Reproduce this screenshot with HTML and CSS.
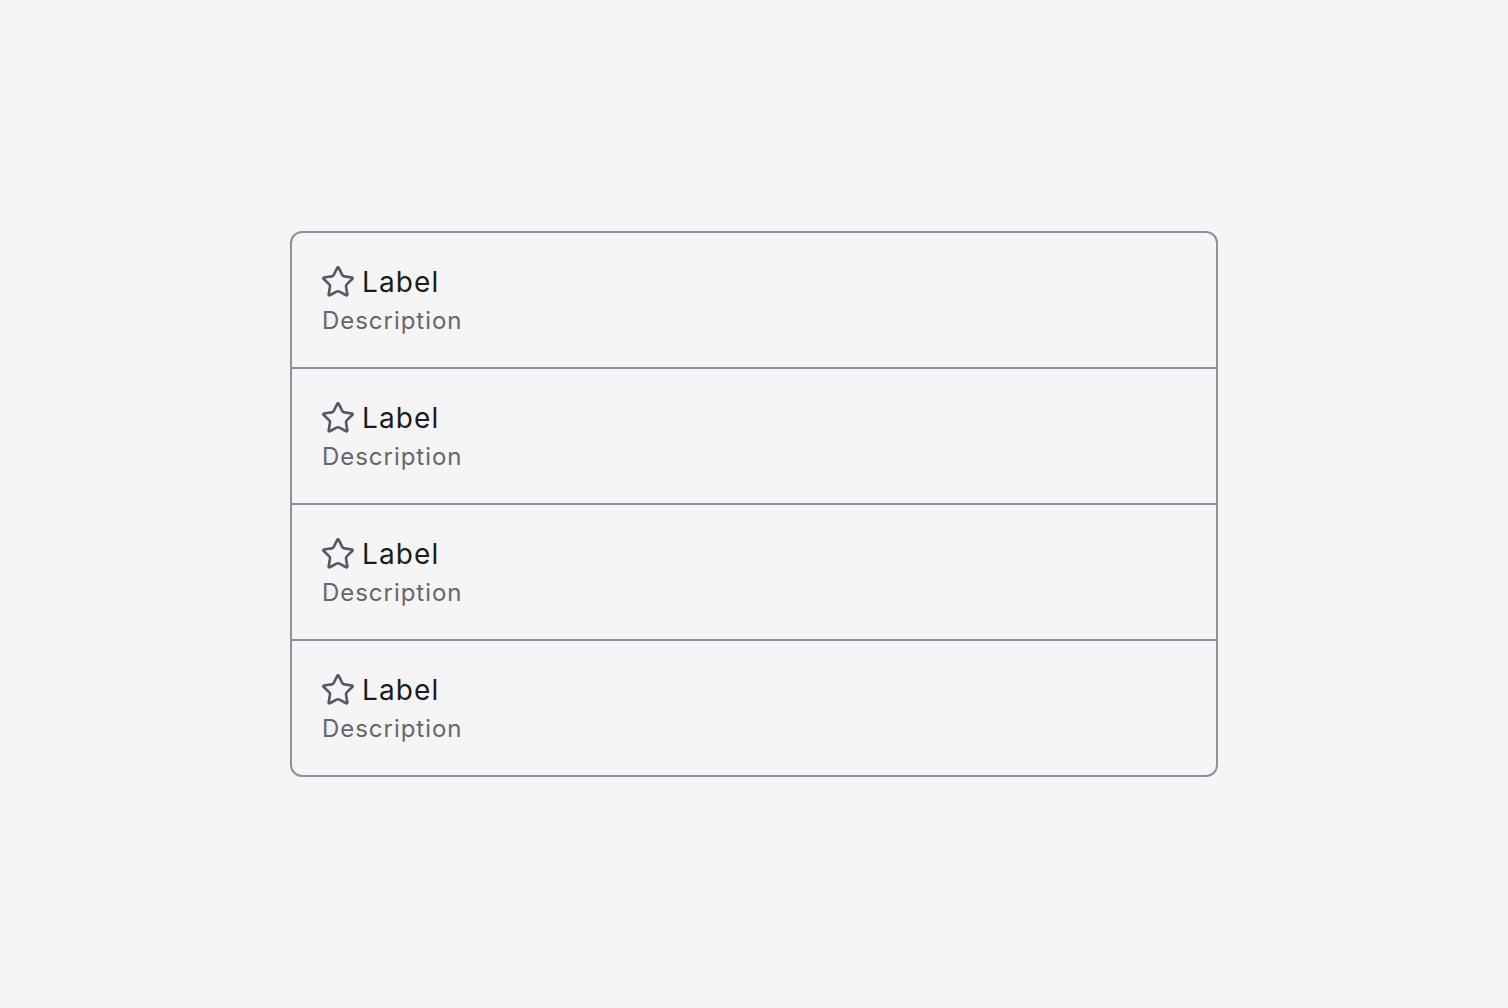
FILE: index.html
```html
<!DOCTYPE html>
<html lang="en">
<head>
<meta charset="utf-8">
<title>List</title>
<link rel="stylesheet" href="styles.css">
</head>
<body>
<main class="page">
  <ul class="list">
    <li class="item">
      <div class="title">
        <svg class="star" viewBox="1.1 1.1 21.8 21.8" aria-hidden="true"><path d="M11.525 2.295a.53.53 0 0 1 .95 0l2.31 4.679a2.123 2.123 0 0 0 1.595 1.16l5.166.756a.53.53 0 0 1 .294.904l-3.736 3.638a2.123 2.123 0 0 0-.611 1.878l.882 5.14a.53.53 0 0 1-.771.56l-4.618-2.428a2.122 2.122 0 0 0-1.973 0L6.396 21.01a.53.53 0 0 1-.77-.56l.881-5.139a2.122 2.122 0 0 0-.611-1.879L2.160 9.795a.53.53 0 0 1 .294-.906l5.165-.755a2.122 2.122 0 0 0 1.597-1.160z"/></svg>
        <span class="label">Label</span>
      </div>
      <div class="desc">Description</div>
    </li>
    <li class="item">
      <div class="title">
        <svg class="star" viewBox="1.1 1.1 21.8 21.8" aria-hidden="true"><path d="M11.525 2.295a.53.53 0 0 1 .95 0l2.31 4.679a2.123 2.123 0 0 0 1.595 1.16l5.166.756a.53.53 0 0 1 .294.904l-3.736 3.638a2.123 2.123 0 0 0-.611 1.878l.882 5.14a.53.53 0 0 1-.771.56l-4.618-2.428a2.122 2.122 0 0 0-1.973 0L6.396 21.01a.53.53 0 0 1-.77-.56l.881-5.139a2.122 2.122 0 0 0-.611-1.879L2.160 9.795a.53.53 0 0 1 .294-.906l5.165-.755a2.122 2.122 0 0 0 1.597-1.160z"/></svg>
        <span class="label">Label</span>
      </div>
      <div class="desc">Description</div>
    </li>
    <li class="item">
      <div class="title">
        <svg class="star" viewBox="1.1 1.1 21.8 21.8" aria-hidden="true"><path d="M11.525 2.295a.53.53 0 0 1 .95 0l2.31 4.679a2.123 2.123 0 0 0 1.595 1.16l5.166.756a.53.53 0 0 1 .294.904l-3.736 3.638a2.123 2.123 0 0 0-.611 1.878l.882 5.14a.53.53 0 0 1-.771.56l-4.618-2.428a2.122 2.122 0 0 0-1.973 0L6.396 21.01a.53.53 0 0 1-.77-.56l.881-5.139a2.122 2.122 0 0 0-.611-1.879L2.160 9.795a.53.53 0 0 1 .294-.906l5.165-.755a2.122 2.122 0 0 0 1.597-1.160z"/></svg>
        <span class="label">Label</span>
      </div>
      <div class="desc">Description</div>
    </li>
    <li class="item">
      <div class="title">
        <svg class="star" viewBox="1.1 1.1 21.8 21.8" aria-hidden="true"><path d="M11.525 2.295a.53.53 0 0 1 .95 0l2.31 4.679a2.123 2.123 0 0 0 1.595 1.16l5.166.756a.53.53 0 0 1 .294.904l-3.736 3.638a2.123 2.123 0 0 0-.611 1.878l.882 5.14a.53.53 0 0 1-.771.56l-4.618-2.428a2.122 2.122 0 0 0-1.973 0L6.396 21.01a.53.53 0 0 1-.77-.56l.881-5.139a2.122 2.122 0 0 0-.611-1.879L2.160 9.795a.53.53 0 0 1 .294-.906l5.165-.755a2.122 2.122 0 0 0 1.597-1.160z"/></svg>
        <span class="label">Label</span>
      </div>
      <div class="desc">Description</div>
    </li>
  </ul>
</main>
</body>
</html>
```

FILE: styles.css
```css
* { box-sizing: border-box; }

html, body {
  margin: 0;
  padding: 0;
  background: #f5f5f5;
}

body {
  font-family: Inter, "Noto Sans", sans-serif;
}

.page {
  width: 1508px;
  height: 1008px;
  display: flex;
  align-items: center;
  justify-content: center;
}

.list {
  list-style: none;
  margin: 0;
  padding: 0;
  width: 928px;
  border: 2px solid #908f9f;
  border-radius: 12px;
  overflow: hidden;
}

.item {
  padding: 29px 30px 28px;
  border-bottom: 2px solid #908f9f;
}

.item:last-child {
  border-bottom: none;
}

.title {
  display: flex;
  align-items: center;
  gap: 8px;
  height: 40px;
}

.star {
  width: 32px;
  height: 32px;
  flex: none;
  fill: none;
  stroke: #575766;
  stroke-width: 1.8;
  stroke-linejoin: round;
  stroke-linecap: round;
}

.label {
  font-size: 28px;
  line-height: 40px;
  letter-spacing: 0.04em;
  color: #1b1b20;
}

.desc {
  margin-top: 1px;
  font-size: 24px;
  line-height: 36px;
  letter-spacing: 0.04em;
  color: #66666f;
}
```
